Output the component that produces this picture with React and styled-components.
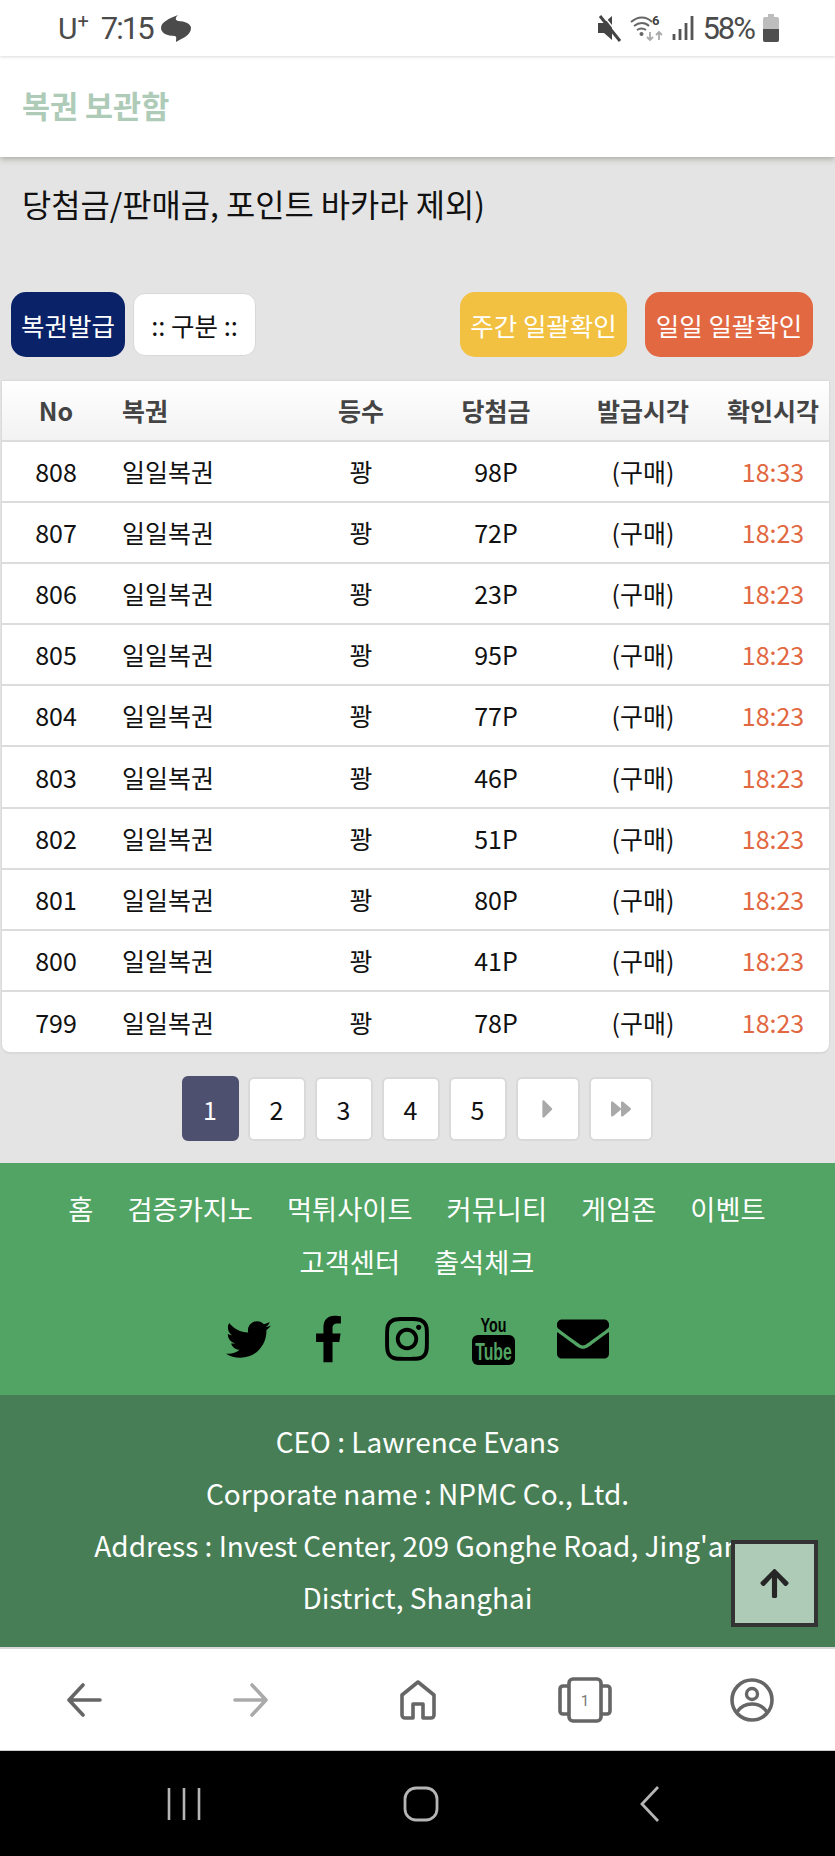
import styled, { createGlobalStyle } from "styled-components";
import { FaTwitter, FaFacebookF, FaInstagram, FaEnvelope, FaArrowUp, FaCaretRight, FaForward } from "react-icons/fa";

const rows = [
  [808, "98P", "18:33"],
  [807, "72P", "18:23"],
  [806, "23P", "18:23"],
  [805, "95P", "18:23"],
  [804, "77P", "18:23"],
  [803, "46P", "18:23"],
  [802, "51P", "18:23"],
  [801, "80P", "18:23"],
  [800, "41P", "18:23"],
  [799, "78P", "18:23"],
];

const menu = ["홈", "검증카지노", "먹튀사이트", "커뮤니티", "게임존", "이벤트", "고객센터", "출석체크"];

export default function App() {
  return (
    <Page>
      <GlobalStyle />
      <StatusBar>
        <StatusLeft>
          <Carrier>
            U<sup>+</sup>
          </Carrier>
          <StatusText>7:15</StatusText>
          <svg width="30" height="27" viewBox="0 0 30 27">
            <path d="M17 0C14 3 14 5 17 6C24 6 30 9 30 13C30 20 22 23 15 27C15 24 16 22 14 21C6 21 0 18 0 13C0 7 9 3 17 0Z" fill="#4b4b4b" />
          </svg>
        </StatusLeft>
        <StatusRight>
          <svg width="24" height="28" viewBox="0 0 24 28">
            <path d="M0 9h6l8-7v24l-8-7H0z" fill="#444" />
            <path d="M2 2l20 25" stroke="#444" strokeWidth="3" />
            <path d="M5 1l19 24" stroke="#fff" strokeWidth="1.6" />
          </svg>
          <svg width="34" height="28" viewBox="0 0 34 28">
            <path d="M1 8c7-6 15-6 21 0M4 12c5-4 11-4 15 0M7 16c3-2 6-2 9 0" stroke="#666" strokeWidth="2" fill="none" />
            <circle cx="11.5" cy="20" r="2" fill="#666" />
            <path d="M20 18v8M17 23l3 3 3-3" stroke="#aaa" strokeWidth="1.8" fill="none" />
            <path d="M29 26v-8M26 21l3-3 3 3" stroke="#aaa" strokeWidth="1.8" fill="none" />
            <text x="22" y="11" fontSize="13" fontWeight="700" fontFamily="Roboto" fill="#444">6</text>
          </svg>
          <svg width="22" height="26" viewBox="0 0 22 26">
            <path d="M2 19v6M8 14v11M14 8v17M20 1v24" stroke="#555" strokeWidth="2.8" />
          </svg>
          <StatusText>58%</StatusText>
          <svg width="18" height="28" viewBox="0 0 18 28">
            <path d="M6 0h6v3h3a2 2 0 0 1 2 2v21a2 2 0 0 1-2 2H3a2 2 0 0 1-2-2V5a2 2 0 0 1 2-2h3z" fill="#bdbdbd" />
            <path d="M1 15h16v11a2 2 0 0 1-2 2H3a2 2 0 0 1-2-2z" fill="#4f4f4f" />
          </svg>
        </StatusRight>
      </StatusBar>

      <AppBar>복권 보관함</AppBar>

      <Main>
        <Notice>당첨금/판매금, 포인트 바카라 제외)</Notice>
        <Toolbar>
          <ToolGroup>
            <ActionButton $bg="#0a2268" $width={114}>복권발급</ActionButton>
            <SelectBox>:: 구분 ::</SelectBox>
          </ToolGroup>
          <ToolGroup $gap={18}>
            <ActionButton $bg="#f2c141" $width={167}>주간 일괄확인</ActionButton>
            <ActionButton $bg="#e26842" $width={168}>일일 일괄확인</ActionButton>
          </ToolGroup>
        </Toolbar>

        <Table>
          <HeadRow>
            <HeadCell>No</HeadCell>
            <HeadCell $left>복권</HeadCell>
            <HeadCell>등수</HeadCell>
            <HeadCell>당첨금</HeadCell>
            <HeadCell>발급시각</HeadCell>
            <HeadCell $last>확인시각</HeadCell>
          </HeadRow>
          {rows.map(([no, prize, time]) => (
            <Row key={no}>
              <Cell>{no}</Cell>
              <Cell $left>일일복권</Cell>
              <Cell>꽝</Cell>
              <Cell>{prize}</Cell>
              <Cell>(구매)</Cell>
              <Cell $last $accent>{time}</Cell>
            </Row>
          ))}
        </Table>

        <Pagination>
          <PageButton $active>1</PageButton>
          <PageButton>2</PageButton>
          <PageButton>3</PageButton>
          <PageButton>4</PageButton>
          <PageButton>5</PageButton>
          <PageButton $wide>
            <FaCaretRight size={30} />
          </PageButton>
          <PageButton $wide>
            <FaForward size={20} />
          </PageButton>
        </Pagination>
      </Main>

      <FooterTop>
        <FooterMenu>
          {menu.map((item) => (
            <MenuItem key={item}>{item}</MenuItem>
          ))}
        </FooterMenu>
        <Socials>
          <TwitterIcon />
          <FacebookIcon />
          <InstagramIcon />
          <svg width="43" height="52" viewBox="0 0 43 52">
            <text transform="translate(21.5 19) scale(.68 1)" textAnchor="middle" fontFamily="Liberation Sans" fontWeight="700" fontSize="21">You</text>
            <rect x="0" y="22" width="43" height="30" rx="6" fill="#000" />
            <text transform="translate(21.5 46.5) scale(.66 1)" textAnchor="middle" fontFamily="Liberation Sans" fontWeight="700" fontSize="24" fill="#51a463">Tube</text>
          </svg>
          <EnvelopeIcon />
        </Socials>
      </FooterTop>

      <FooterInfo>
        <p>CEO : Lawrence Evans</p>
        <p>Corporate name : NPMC Co., Ltd.</p>
        <p>Address : Invest Center, 209 Gonghe Road, Jing'an District, Shanghai</p>
      </FooterInfo>

      <BrowserNav>
        <svg width="36" height="34" viewBox="0 0 36 34">
          <path d="M34 17H3M17 2L3 17l14 15" stroke="#666" strokeWidth="3.6" fill="none" strokeLinecap="round" strokeLinejoin="round" />
        </svg>
        <svg width="36" height="34" viewBox="0 0 36 34">
          <path d="M2 17h31M19 2l14 15-14 15" stroke="#aaa" strokeWidth="3.6" fill="none" strokeLinecap="round" strokeLinejoin="round" />
        </svg>
        <svg width="36" height="40" viewBox="0 0 36 40">
          <path d="M18 2L2 15v20a3 3 0 0 0 3 3h8V24h10v14h8a3 3 0 0 0 3-3V15z" stroke="#666" strokeWidth="3.6" fill="none" strokeLinejoin="round" />
        </svg>
        <svg width="54" height="46" viewBox="0 0 54 46">
          <rect x="11" y="2" width="32" height="42" rx="4" stroke="#666" strokeWidth="3.6" fill="none" />
          <path d="M11 9H5a3 3 0 0 0-3 3v22a3 3 0 0 0 3 3h6M43 9h6a3 3 0 0 1 3 3v22a3 3 0 0 1-3 3h-6" stroke="#666" strokeWidth="3.6" fill="none" />
          <text x="27" y="29" textAnchor="middle" fontSize="15" fontFamily="Roboto" fill="#777">1</text>
        </svg>
        <svg width="44" height="44" viewBox="0 0 44 44">
          <circle cx="22" cy="22" r="20" stroke="#666" strokeWidth="3.6" fill="none" />
          <circle cx="22" cy="16" r="5.5" stroke="#666" strokeWidth="3.4" fill="none" />
          <path d="M7 34c4-6 9-8 15-8s11 2 15 8" stroke="#666" strokeWidth="3.6" fill="none" />
        </svg>
      </BrowserNav>

      <SystemNav>
        <svg width="34" height="34" viewBox="0 0 34 34">
          <path d="M2 1v32M17 1v32M32 1v32" stroke="#b5b5b5" strokeWidth="2.6" />
        </svg>
        <svg width="36" height="36" viewBox="0 0 36 36">
          <rect x="2" y="2" width="32" height="32" rx="11" stroke="#b5b5b5" strokeWidth="2.8" fill="none" />
        </svg>
        <svg width="20" height="36" viewBox="0 0 20 36">
          <path d="M18 1L2 18l16 17" stroke="#b5b5b5" strokeWidth="2.8" fill="none" />
        </svg>
      </SystemNav>

      <TopButton>
        <FaArrowUp size={33} />
      </TopButton>
    </Page>
  );
}

const GlobalStyle = createGlobalStyle`
  * {
    box-sizing: border-box;
  }
  body {
    margin: 0;
    font-family: "Noto Sans CJK KR", "Noto Sans", sans-serif;
    background: #e4e4e4;
  }
`;

const Page = styled.div`
  position: relative;
  width: 835px;
  height: 1856px;
  overflow: hidden;
  display: flex;
  flex-direction: column;
`;

const StatusBar = styled.div`
  height: 56px;
  flex: none;
  padding: 0 55px 0 58px;
  background: #fff;
  display: flex;
  justify-content: space-between;
  align-items: center;
  position: relative;
  z-index: 3;
  box-shadow: 0 1px 3px rgba(0, 0, 0, 0.15);
`;

const StatusLeft = styled.div`
  display: flex;
  align-items: center;
  gap: 8px;
`;

const StatusRight = styled.div`
  display: flex;
  align-items: center;
  gap: 8px;
`;

const Carrier = styled.span`
  font: 400 30px Roboto, sans-serif;
  color: #4b4b4b;
  margin-right: 4px;
  sup {
    font-size: 20px;
    line-height: 0;
  }
`;

const StatusText = styled.span`
  font: 400 31px Roboto, sans-serif;
  color: #4b4b4b;
  letter-spacing: -2px;
`;

const AppBar = styled.div`
  height: 101px;
  flex: none;
  padding: 0 0 4px 22px;
  background: #fff;
  color: #aecbb8;
  font-size: 30.5px;
  font-weight: 700;
  display: flex;
  align-items: center;
  position: relative;
  z-index: 2;
  box-shadow: 0 2px 6px rgba(60, 60, 40, 0.35);
`;

const Main = styled.div`
  height: 1006px;
  flex: none;
  background: #e4e4e4;
`;

const Notice = styled.div`
  height: 135px;
  padding: 24px 0 0 22px;
  font-size: 31.8px;
  line-height: 44px;
  color: #111;
`;

const Toolbar = styled.div`
  height: 89px;
  padding: 0 22px 0 11px;
  display: flex;
  justify-content: space-between;
  align-items: flex-start;
`;

const ToolGroup = styled.div`
  display: flex;
  gap: ${(p) => p.$gap || 8}px;
  align-items: center;
`;

const ActionButton = styled.div`
  width: ${(p) => p.$width}px;
  height: 65px;
  border-radius: 15px;
  background: ${(p) => p.$bg};
  color: #fff;
  font-size: 25.5px;
  display: flex;
  align-items: center;
  justify-content: center;
  white-space: nowrap;
`;

const SelectBox = styled.div`
  width: 123px;
  height: 63px;
  border-radius: 12px;
  background: #fff;
  border: 1px solid #d8d8d8;
  color: #111;
  font-size: 25.5px;
  display: flex;
  align-items: center;
  justify-content: center;
`;

const Table = styled.div`
  margin: 0 6px 0 2px;
  height: 672px;
  background: #fff;
  border-radius: 0 0 8px 8px;
  border-bottom: 1px solid #d8d8d8;
  box-shadow: 0 0 2px rgba(0, 0, 0, 0.15);
`;

const Row = styled.div`
  display: grid;
  grid-template-columns: 108px 180px 142px 128px 166px 103px;
  height: 61.1px;
  align-items: center;
  border-bottom: 2px solid #dcdcdc;
  &:last-child {
    border-bottom: 0;
  }
`;

const HeadRow = styled(Row)`
  height: 61px;
  background: linear-gradient(#ffffff, #f2f2f2);
`;

const Cell = styled.div`
  font-size: 25px;
  line-height: 1;
  white-space: nowrap;
  text-align: ${(p) => (p.$left ? "left" : "center")};
  padding-left: ${(p) => (p.$left ? "12px" : "0")};
  padding-right: ${(p) => (p.$last ? "9px" : "0")};
  color: ${(p) => (p.$accent ? "#e26842" : "#111")};
`;

const HeadCell = styled(Cell)`
  color: #444;
  font-weight: 700;
`;

const Pagination = styled.div`
  margin-top: 23px;
  display: flex;
  justify-content: center;
  align-items: center;
  gap: 9px;
  padding-right: 1px;
`;

const PageButton = styled.div`
  width: ${(p) => (p.$wide ? 64 : p.$active ? 57 : 58)}px;
  height: ${(p) => (p.$active ? 65 : 64)}px;
  border-radius: 6px;
  background: ${(p) => (p.$active ? "#4e5070" : "#fff")};
  border: 2px solid ${(p) => (p.$active ? "#4e5070" : "#d9d9d9")};
  color: ${(p) => (p.$active ? "#fff" : "#111")};
  font-size: 25px;
  display: flex;
  align-items: center;
  justify-content: center;
  svg {
    color: #a9a9a9;
  }
`;

const FooterTop = styled.div`
  height: 232px;
  flex: none;
  background: #51a463;
  padding-top: 19px;
`;

const FooterMenu = styled.div`
  padding: 0 40px 0 39px;
  display: flex;
  flex-wrap: wrap;
  justify-content: center;
  column-gap: 34px;
`;

const MenuItem = styled.div`
  color: #fff;
  font-size: 27.3px;
  line-height: 53px;
`;

const Socials = styled.div`
  margin-top: 21px;
  height: 60px;
  display: flex;
  justify-content: center;
  align-items: center;
  gap: 42.5px;
  color: #000;
`;

const TwitterIcon = styled(FaTwitter)`
  width: 45px;
  height: 45px;
`;

const FacebookIcon = styled(FaFacebookF)`
  width: 29px;
  height: 48px;
`;

const InstagramIcon = styled(FaInstagram)`
  width: 44px;
  height: 50px;
`;

const EnvelopeIcon = styled(FaEnvelope)`
  width: 52px;
  height: 52px;
`;

const FooterInfo = styled.div`
  height: 252px;
  flex: none;
  background: #477e55;
  padding: 20px 85px 0;
  color: #fff;
  text-align: center;
  font-size: 28px;
  line-height: 52px;
  p {
    margin: 0 -20px;
  }
`;

const BrowserNav = styled.div`
  height: 104px;
  flex: none;
  background: #fff;
  border-top: 2px solid #d8d8d8;
  border-bottom: 1px solid #ccc;
  display: grid;
  grid-template-columns: repeat(5, 1fr);
  justify-items: center;
  align-items: center;
`;

const SystemNav = styled.div`
  height: 105px;
  flex: none;
  background: #000;
  padding: 0 175px 0 167px;
  display: flex;
  justify-content: space-between;
  align-items: center;
`;

const TopButton = styled.div`
  position: absolute;
  left: 731px;
  top: 1540px;
  width: 87px;
  height: 87px;
  background: #aecbb8;
  border: 4px solid #333;
  color: #262626;
  display: flex;
  align-items: center;
  justify-content: center;
`;
